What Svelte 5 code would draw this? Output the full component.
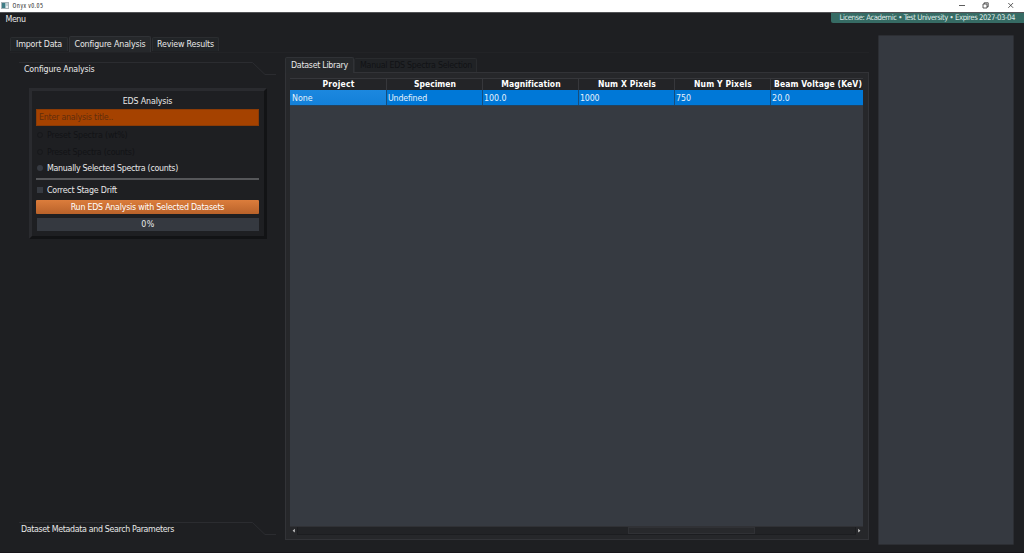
<script>
  const tabs = [
    { label: 'Import Data', w: 46, box: 58 },
    { label: 'Configure Analysis', w: 71, box: 82, active: true },
    { label: 'Review Results', w: 57, box: 67 }
  ];
  const columns = [
    { name: 'Project', w: 32, value: 'None', vw: 20.5 },
    { name: 'Specimen', w: 42, value: 'Undefined', vw: 39 },
    { name: 'Magnification', w: 59, value: '100.0', vw: 22.5 },
    { name: 'Num X Pixels', w: 58, value: '1000', vw: 19.5 },
    { name: 'Num Y Pixels', w: 58, value: '750', vw: 15 },
    { name: 'Beam Voltage (KeV)', w: 88, value: '20.0', vw: 18 }
  ];

  // Tracks a label so that it fills the given width.
  function fit(node, width) {
    node.style.letterSpacing = '0px';
    const natural = node.getBoundingClientRect().width;
    const gap = (width - natural) / node.textContent.length;
    node.style.letterSpacing = gap + 'px';
  }
</script>

{#snippet sectionLine()}
  <svg class="section-line" width="258" height="14" viewBox="0 0 258 14">
    <path d="M0 .5H233.5L246 12.5H257" fill="none" stroke="#2b2c30" />
  </svg>
{/snippet}

<div class="window">
  <header class="titlebar">
    <svg class="logo" width="8" height="7" viewBox="0 0 8 7">
      <rect x=".5" y=".5" width="7" height="6" fill="#e9eef0" stroke="#a9b4b8" />
      <rect x="1" y="1" width="3.4" height="5" fill="#3f7d86" />
      <rect x="5" y="1" width="2" height="3" fill="#c5d2d5" />
    </svg>
    <span class="name"><span class="t" use:fit={31}>Onyx v0.05</span></span>
    <svg class="controls" width="60" height="12" viewBox="0 0 60 12" fill="none" stroke="#333" stroke-width=".8">
      <path d="M4 5.5H10" />
      <path d="M28 4H32V8H28ZM29.2 4V2.8H33.2V6.8H32" />
      <path d="M53.3 3L58.1 7.8M58.1 3L53.3 7.8" />
    </svg>
  </header>

  <div class="menubar">
    <span class="t menu" use:fit={20}>Menu</span>
    <div class="license"><span class="t" use:fit={175.5}>License: Academic • Test University • Expires 2027-03-04</span></div>
  </div>

  <div class="body">
    <main>
      <nav class="tabs">
        {#each tabs as tab}
          <div class="tab" class:active={tab.active} style:width="{tab.box}px">
            <span class="t" use:fit={tab.w}>{tab.label}</span>
          </div>
        {/each}
      </nav>
      <div class="content">
        <aside>
          <div class="section">
            {@render sectionLine()}
            <div class="section-name first"><span class="t" use:fit={70.5}>Configure Analysis</span></div>
          </div>
          <section class="frame">
            <h2><span class="t" use:fit={49.5}>EDS Analysis</span></h2>
            <div class="input"><span class="t" use:fit={74}>Enter analysis title..</span></div>
            <div class="option disabled"><i class="radio"></i><span class="t" use:fit={80.5}>Preset Spectra (wt%)</span></div>
            <div class="option disabled"><i class="radio"></i><span class="t" use:fit={87.5}>Preset Spectra (counts)</span></div>
            <div class="option"><i class="radio"></i><span class="t" use:fit={131}>Manually Selected Spectra (counts)</span></div>
            <hr />
            <div class="option check"><i class="box"></i><span class="t" use:fit={70}>Correct Stage Drift</span></div>
            <button><span class="t" use:fit={153.5}>Run EDS Analysis with Selected Datasets</span></button>
            <div class="progress"><span class="t" use:fit={13.5}>0%</span></div>
          </section>
          <div class="section bottom">
            {@render sectionLine()}
            <div class="section-name"><span class="t" use:fit={153}>Dataset Metadata and Search Parameters</span></div>
          </div>
        </aside>

        <section class="library">
          <nav class="subtabs">
            <div class="subtab active"><span class="t" use:fit={57}>Dataset Library</span></div>
            <div class="subtab off"><span class="t" use:fit={112}>Manual EDS Spectra Selection</span></div>
          </nav>
          <div class="pane">
            <div class="row head">
              {#each columns as col}
                <div class="cell"><span class="t" use:fit={col.w}>{col.name}</span></div>
              {/each}
            </div>
            <div class="row data">
              {#each columns as col}
                <div class="cell"><span class="t" use:fit={col.vw}>{col.value}</span></div>
              {/each}
            </div>
            <div class="empty"></div>
            <div class="scroll">
              <svg width="7" height="9" viewBox="0 0 7 9"><path d="M4.8 1.8V5.6L2.6 3.7Z" fill="#c8c8c8" /></svg>
              <div class="track"><div class="thumb"></div></div>
              <svg width="7" height="9" viewBox="0 0 7 9"><path d="M2.2 1.8V5.6L4.4 3.7Z" fill="#c8c8c8" /></svg>
            </div>
          </div>
        </section>
      </div>
    </main>
    <div class="side"></div>
  </div>
</div>

<style>
  :global(body) { margin: 0; background: #1e1f22; }
  .window, .window :global(*) { box-sizing: border-box; }
  .window {
    width: 1024px; height: 553px; overflow: hidden;
    display: flex; flex-direction: column;
    background: #1e1f22; color: #e9e9e9;
    border-bottom: 1px solid #17151a;
    font: 8.8px/12px "DejaVu Sans Condensed", "DejaVu Sans", sans-serif;
    font-stretch: condensed;
    white-space: nowrap;
  }
  .t { display: inline-block; flex: none; }
  .titlebar {
    height: 12px; flex: none; display: flex; align-items: center;
    background: #fff; color: #333; padding-left: 1px; font-size: 7px;
  }
  .logo { margin-bottom: 1px; }
  .name { margin-left: 3.5px; flex: 1; line-height: 12px; font-family: "Open Sans", sans-serif; }
  .controls { margin-right: 9px; }
  .menubar { height: 23px; flex: none; display: flex; justify-content: space-between; border-top: 1px solid #525356; }
  .menu { margin: 0 0 0 5.5px; }
  .license {
    width: 193px; height: 10px; padding-left: 8.5px; background: #366b64;
    color: #dfeae7; border-radius: 0 0 0 2px; font-size: 7.7px; line-height: 10px;
  }
  .body { flex: 1; display: flex; min-height: 0; }
  main { width: 869px; padding-left: 10px; }
  .tabs { display: flex; gap: 1px; height: 17px; align-items: center; }
  .tab {
    height: 14px; display: flex; justify-content: center; align-items: center; line-height: 11px;
    background: #212427; border: 1px solid #2b2d30; border-bottom: 0; border-radius: 2px 2px 0 0;
  }
  .tab.active { height: 16px; background: #26282b; border-color: #303236; }
  .content { display: flex; height: 489px; border-top: 1px solid #222326; }
  aside { width: 275px; padding: 9px 0 0 9px; display: flex; flex-direction: column; }
  .section { height: 26px; flex: none; display: grid; }
  .section > :global(*) { grid-area: 1 / 1; }
  .section-name { padding: 1px 0 0 2px; }
  .section-name.first { padding-left: 5px; }
  .bottom { margin-top: auto; margin-bottom: 6px; height: 13px; }
  .frame {
    width: 238px; height: 151px; margin-left: 10px; padding: 4px 5px 0 4px;
    border: 3px solid; border-color: #2a2b2f #121315 #121315 #2a2b2f;
    display: flex; flex-direction: column; flex: none;
  }
  h2 { margin: 0; height: 14px; flex: none; font: inherit; text-align: center; line-height: 12px; }
  .input {
    height: 17px; flex: none; background: #a54200; color: #622d0c; border: 1px solid #8b3b06;
    padding: 1px 0 0 2px;
  }
  .option { height: 16.5px; flex: none; display: flex; align-items: center; gap: 4px; padding-left: 1px; }
  .input + .option { margin-top: 1px; }
  .disabled { color: #121316; }
  .radio { width: 6px; height: 6px; border-radius: 50%; background: #363a41; }
  .disabled .radio { background: none; border: 1px solid #17181b; }
  .box { width: 6px; height: 6px; background: #363a41; }
  hr { width: 100%; height: 2px; margin: 1.5px 0 2px; border: 0; background: #56575a; flex: none; }
  .check { height: 16px; }
  button {
    height: 14px; margin: 2px 0 4px; padding: 0; border: 0; border-radius: 1px; color: #fff; font: inherit;
    line-height: 14px; background: linear-gradient(#dc7d3c, #b9622a); flex: none;
  }
  .progress { height: 13px; flex: none; background: #353940; text-align: center; line-height: 13px; margin-left: 1px; }
  .library { width: 584px; padding-top: 4px; display: flex; flex-direction: column; }
  .subtabs { display: flex; height: 15px; align-items: flex-end; }
  .subtab {
    height: 14px; padding: 0 0 0 5px; background: #202225; border: 1px solid #292b2e;
    border-bottom: 0; border-radius: 2px 2px 0 0; width: 123px; line-height: 12px;
  }
  .subtab.active { width: 69px; height: 16px; padding: 1px 0 0 5px; background: #25272a; border-color: #303236; margin-bottom: -1px; z-index: 1; }
  .off { color: #111215; }
  .pane {
    flex: none; height: 468px; border: 1px solid #323337; background: #26272a;
    padding: 5px 5px 4px 4px; display: flex; flex-direction: column;
  }
  .row { display: grid; grid-template-columns: 97px repeat(4, 96px) 1fr; flex: none; }
  .head { height: 12px; font-weight: bold; font-size: 8.5px; color: #fff; border-top: 1px solid #36373b; background: #232427; }
  .head .cell { text-align: center; line-height: 11px; padding-left: 1px; border-right: 1px solid #36373b; }
  .head .cell:last-child { border-right: 0; padding-left: 2px; }
  .data { height: 16px; background: #0078d7; color: #e7f2fb; border-bottom: 1px solid #24425d; }
  .data .cell { padding: 2px 0 0 1px; border-right: 1px solid #174d7c; }
  .data .cell:first-child { padding-left: 2px; background: linear-gradient(#1c88df, #1380d9); }
  .data .cell:last-child { border-right: 0; }
  .empty { flex: 1; background: #363a41; }
  .scroll { height: 9px; display: flex; flex: none; border-top: 1px solid #303135; }
  .track { flex: 1; background: #222326; border: 1px solid #1c1d20; border-width: 0 1px 1px; padding-left: 330px; }
  .thumb { width: 127px; height: 7px; background: #28292c; border: 1px solid #303135; }
  .side { margin-left: 9px; width: 136px; height: 510px; background: #353940; border: 1px solid #2c2e33; border-radius: 1px; }
</style>
